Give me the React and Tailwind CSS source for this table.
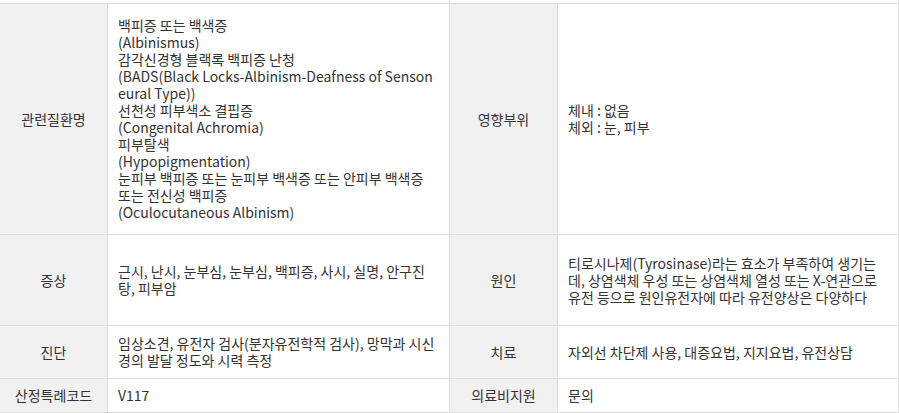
import React from "react";

const rows = [
  {
    h: "h-[231px]",
    cells: [
      "관련질환명",
      [
        "백피증 또는 백색증",
        "(Albinismus)",
        "감각신경형 블랙록 백피증 난청",
        "(BADS(Black Locks-Albinism-Deafness of Sensoneural Type))",
        "선천성 피부색소 결핍증",
        "(Congenital Achromia)",
        "피부탈색",
        "(Hypopigmentation)",
        "눈피부 백피증 또는 눈피부 백색증 또는 안피부 백색증 또는 전신성 백피증",
        "(Oculocutaneous Albinism)",
      ],
      "영향부위",
      ["체내 : 없음", "체외 : 눈, 피부"],
    ],
  },
  {
    h: "h-[91px]",
    cells: [
      "증상",
      ["근시, 난시, 눈부심, 눈부심, 백피증, 사시, 실명, 안구진탕, 피부암"],
      "원인",
      ["티로시나제(Tyrosinase)라는 효소가 부족하여 생기는데, 상염색체 우성 또는 상염색체 열성 또는 X-연관으로 유전 등으로 원인유전자에 따라 유전양상은 다양하다"],
    ],
  },
  {
    h: "h-[53px]",
    cells: [
      "진단",
      ["임상소견, 유전자 검사(분자유전학적 검사), 망막과 시신경의 발달 정도와 시력 측정"],
      "치료",
      ["자외선 차단제 사용, 대증요법, 지지요법, 유전상담"],
    ],
  },
  {
    h: "h-[34px]",
    cells: ["산정특례코드", ["V117"], "의료비지원", ["문의"]],
  },
];

function Label({ text, h }) {
  return (
    <div className={`${h} bg-[#f1f1f1] border-r border-b border-[#dddddd] flex items-center justify-center text-center px-2`}>
      {text}
    </div>
  );
}

function Value({ lines, h }) {
  return (
    <div className={`${h} border-r border-b border-[#dddddd] flex flex-col justify-center pl-[10px] pr-[10px] break-all`}>
      {lines.map((l, i) => (
        <div key={i}>{l}</div>
      ))}
    </div>
  );
}

export default function App() {
  return (
    <div
      className="w-[899px] h-[413px] bg-white text-[#333333] text-[14px] leading-[17px] overflow-hidden"
      style={{ fontFamily: '"Noto Sans CJK KR", "Noto Sans", sans-serif' }}
    >
      <div className="grid grid-cols-[108px_342px_108px_341px] h-[3px]">
        <div />
        <div className="border-r border-[#dddddd]" />
        <div />
        <div className="border-r border-[#dddddd]" />
      </div>
      <div className="grid grid-cols-[108px_342px_108px_341px] border-t border-[#dddddd]">
        {rows.map((r, i) => (
          <React.Fragment key={i}>
            <Label text={r.cells[0]} h={r.h} />
            <Value lines={r.cells[1]} h={r.h} />
            <Label text={r.cells[2]} h={r.h} />
            <Value lines={r.cells[3]} h={r.h} />
          </React.Fragment>
        ))}
      </div>
    </div>
  );
}
